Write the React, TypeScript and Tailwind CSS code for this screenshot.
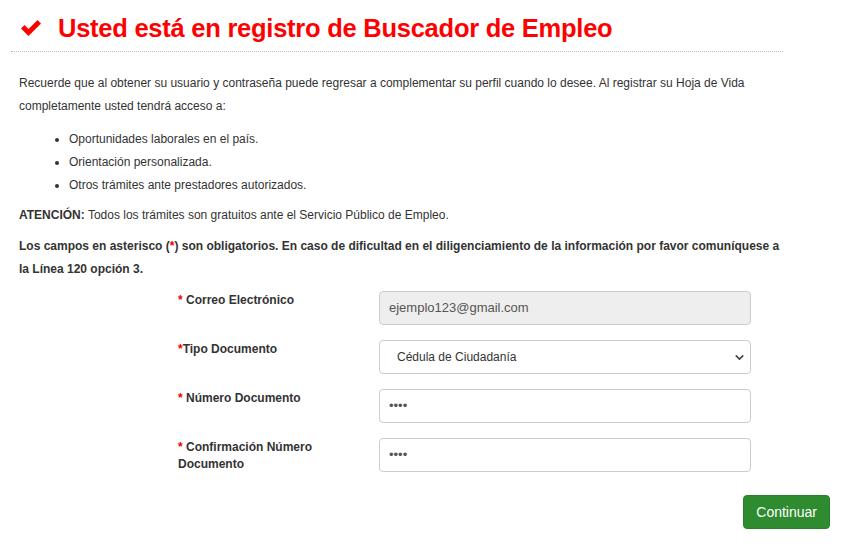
import { ChevronDown } from "lucide-react";

const font = { fontFamily: '"Liberation Sans", Arial, sans-serif' };

function Field({
  label,
  children,
}: {
  label: React.ReactNode;
  children: React.ReactNode;
}) {
  return (
    <div className="flex items-start h-[34px]">
      <div className="w-[201px] pl-[178px] box-content shrink-0 pt-[1px] text-[12px] leading-[17px] font-bold text-[#333]">
        {label}
      </div>
      <div className="w-[372px]">{children}</div>
    </div>
  );
}

const Star = () => <span className="text-[#e00]">* </span>;

const dots = "h-[34px] rounded-[4px] border border-[#ccc] bg-white px-[9px] flex items-center text-[13px] text-[#555]";

export default function App() {
  return (
    <div className="bg-white w-[866px] h-[548px] text-[#333]" style={font}>
      <div className="w-[772px] ml-[11px]">
        {/* Title */}
        <div className="flex items-center gap-[16px] pl-[9px] pt-[13px] pb-[8px] border-b border-dotted border-[#bbb]">
          <svg width="22" height="18" viewBox="0 0 22 18">
            <path d="M1 9.5 L4.5 6 L8.5 10 L17.5 1 L21 4.5 L8.5 17 Z" fill="#f00" />
          </svg>
          <h1 className="text-[25.5px] leading-[30px] font-bold text-[#f00] tracking-[-0.25px]">
            Usted está en registro de Buscador de Empleo
          </h1>
        </div>

        {/* Intro */}
        <div className="pl-[8px] pt-[20px] text-[12px] leading-[23px]">
          <p>
            Recuerde que al obtener su usuario y contraseña puede regresar a complementar su perfil cuando lo
            desee. Al registrar su Hoja de Vida completamente usted tendrá acceso a:
          </p>
          <ul className="list-disc pl-[50px] mt-[10px]">
            <li>Oportunidades laborales en el país.</li>
            <li>Orientación personalizada.</li>
            <li>Otros trámites ante prestadores autorizados.</li>
          </ul>
          <p className="mt-[7px]">
            <b>ATENCIÓN:</b> Todos los trámites son gratuitos ante el Servicio Público de Empleo.
          </p>
          <p className="mt-[8px] font-bold">
            Los campos en asterisco (<span className="text-[#e00]">*</span>) son obligatorios. En caso de
            dificultad en el diligenciamiento de la información por favor comuníquese a la Línea 120 opción 3.
          </p>
        </div>
      </div>

      {/* Form */}
      <div className="mt-[10px] flex flex-col gap-[15px]">
        <Field
          label={
            <>
              <Star />
              Correo Electrónico
            </>
          }
        >
          <div className="h-[34px] rounded-[4px] border border-[#ccc] bg-[#eee] px-[9px] flex items-center text-[13px] text-[#555]">
            ejemplo123@gmail.com
          </div>
        </Field>
        <Field
          label={
            <>
              <span className="text-[#e00]">*</span>Tipo Documento
            </>
          }
        >
          <div className="h-[34px] rounded-[4px] border border-[#ccc] bg-white pl-[17px] pr-[4px] flex items-center justify-between text-[12px] text-[#333]">
            <span>Cédula de Ciudadanía</span>
            <ChevronDown size={13} strokeWidth={3} className="text-[#444]" />
          </div>
        </Field>
        <Field
          label={
            <>
              <Star />
              Número Documento
            </>
          }
        >
          <div className={dots}>••••</div>
        </Field>
        <Field
          label={
            <>
              <Star />
              Confirmación Número Documento
            </>
          }
        >
          <div className={dots}>••••</div>
        </Field>
      </div>

      <div className="w-[830px] flex justify-end mt-[23px]">
        <button className="h-[34px] px-[12px] rounded-[4px] bg-[#2e8b30] border border-[#2a7f2c] text-white text-[14px]">
          Continuar
        </button>
      </div>
    </div>
  );
}
